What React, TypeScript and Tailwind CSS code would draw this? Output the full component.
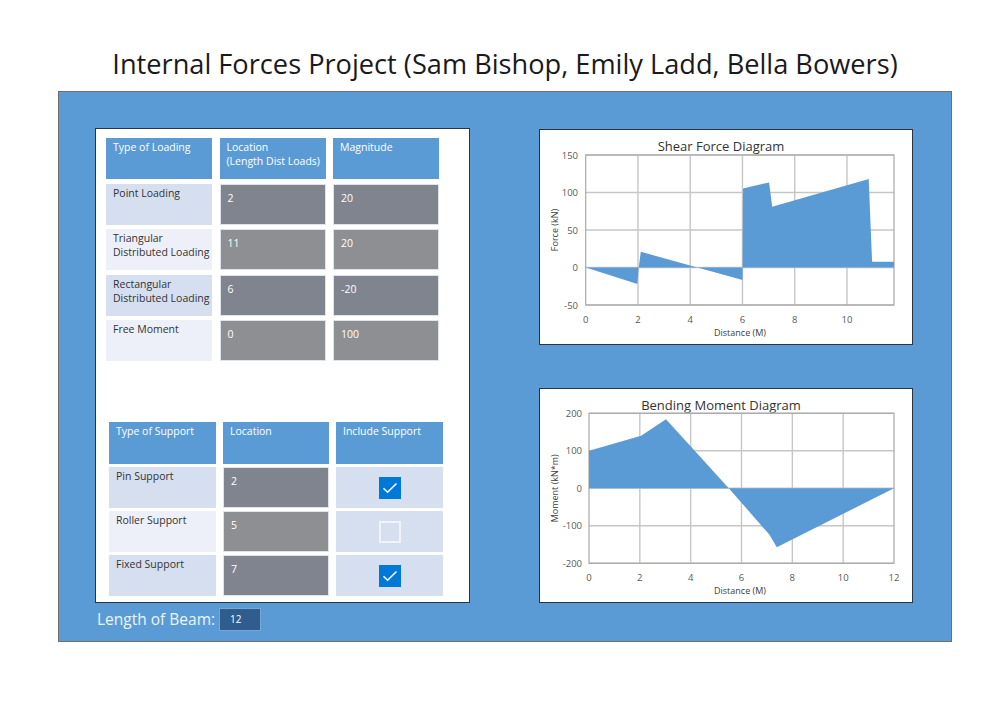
import React from 'react';

const FONT = "font-['Open_Sans','Noto_Sans',sans-serif]";

type Pt = [number, number];

const loadRows = [
  { label: ['Point Loading'], loc: '2', mag: '20', dark: true },
  { label: ['Triangular', 'Distributed Loading'], loc: '11', mag: '20', dark: false },
  { label: ['Rectangular', 'Distributed Loading'], loc: '6', mag: '-20', dark: true },
  { label: ['Free Moment'], loc: '0', mag: '100', dark: false },
];

const supportRows = [
  { label: 'Pin Support', loc: '2', on: true, dark: true },
  { label: 'Roller Support', loc: '5', on: false, dark: false },
  { label: 'Fixed Support', loc: '7', on: true, dark: true },
];

const Header = ({ lines }: { lines: string[] }) => (
  <div className="bg-[#5b9bd5] text-white text-[10.5px] leading-[14px] pl-[7px] pt-[2px] whitespace-nowrap">
    {lines.map((l) => (
      <div key={l}>{l}</div>
    ))}
  </div>
);

const Label = ({ lines, dark }: { lines: string[]; dark: boolean }) => (
  <div
    className={`${dark ? 'bg-[#d6dff0]' : 'bg-[#edf0f9]'} text-[#333] text-[10.5px] leading-[14px] pl-[7px] pt-[2px] whitespace-nowrap`}
  >
    {lines.map((l) => (
      <div key={l}>{l}</div>
    ))}
  </div>
);

const Value = ({ v, dark }: { v: string; dark: boolean }) => (
  <div
    className={`${dark ? 'bg-[#80848f]' : 'bg-[#8e8f93]'} border border-[#dfe3ec] text-white text-[10.5px] leading-[14px] pl-[7px] pt-[6px]`}
  >
    {v}
  </div>
);

const Check = ({ on }: { on: boolean }) => (
  <div className="bg-[#d6dff0] flex items-center justify-center">
    {on ? (
      <div className="w-[22px] h-[22px] bg-[#0078d7] flex items-center justify-center">
        <svg width="16" height="12" viewBox="0 0 16 12">
          <path d="M1.5 6.2 L5.6 10.2 L14.5 1.5" fill="none" stroke="white" strokeWidth="1.6" />
        </svg>
      </div>
    ) : (
      <div className="w-[22px] h-[22px] border-2 border-[#f1f3f9]" />
    )}
  </div>
);

type ChartProps = {
  title: string;
  yLabel: string;
  left: number;
  right: number;
  top: number;
  bottom: number;
  xMax: number;
  xTicks: number[];
  yMin: number;
  yMax: number;
  yTicks: number[];
  data: Pt[];
  yLabelX: number;
  yLabelRight: number;
  height: number;
};

const Chart = (p: ChartProps) => {
  const sx = (u: number) => p.left + ((p.right - p.left) * u) / p.xMax;
  const sy = (v: number) => p.top + ((p.bottom - p.top) * (p.yMax - v)) / (p.yMax - p.yMin);
  const pts = [[0, 0] as Pt, ...p.data, [p.data[p.data.length - 1][0], 0] as Pt]
    .map(([u, v]) => `${sx(u).toFixed(1)},${sy(v).toFixed(1)}`)
    .join(' ');
  const mid = (p.top + p.bottom) / 2;
  return (
    <div className="bg-white border border-[#2b3440] w-[374px]">
      <svg width="372" height={p.height} className="block">
        <text x="181" y="21" textAnchor="middle" fontSize="13" fill="#333" fontFamily="Open Sans">
          {p.title}
        </text>
        {p.xTicks.map((t) => (
          <line key={'v' + t} x1={sx(t)} x2={sx(t)} y1={p.top} y2={p.bottom} stroke="#c6c6c6" strokeWidth="1.4" />
        ))}
        {p.yTicks.map((t) => (
          <line key={'h' + t} x1={p.left} x2={p.right} y1={sy(t)} y2={sy(t)} stroke="#c6c6c6" strokeWidth="1.4" />
        ))}
        <rect x={p.left} y={p.top} width={p.right - p.left} height={p.bottom - p.top} fill="none" stroke="#a9a9a9" strokeWidth="1.2" />
        <polygon points={pts} fill="#5b9bd5" />
        {p.yTicks.map((t) => (
          <text key={'yl' + t} x={p.yLabelRight} y={sy(t) + 3.5} textAnchor="end" fontSize="9.5" fill="#595959" fontFamily="Open Sans">
            {t}
          </text>
        ))}
        {[0, ...p.xTicks, ...(p.xMax === 12 ? [12] : [])].map((t) => (
          <text key={'xl' + t} x={sx(t)} y={p.bottom + 18} textAnchor="middle" fontSize="9.5" fill="#595959" fontFamily="Open Sans">
            {t}
          </text>
        ))}
        <text x="200" y={p.bottom + 31} textAnchor="middle" fontSize="9" fill="#404040" fontFamily="Open Sans">
          Distance (M)
        </text>
        <text
          x={p.yLabelX}
          y={mid}
          textAnchor="middle"
          fontSize="9"
          fill="#404040"
          fontFamily="Open Sans"
          transform={`rotate(-90 ${p.yLabelX} ${mid})`}
          dominantBaseline="middle"
        >
          {p.yLabel}
        </text>
      </svg>
    </div>
  );
};

const shearData: Pt[] = [
  [0, 0],
  [1.98, -22],
  [2.03, 0],
  [2.11, 21],
  [6, -16.5],
  [6.02, 105.5],
  [7.02, 113.5],
  [7.14, 81],
  [10.83, 118],
  [10.96, 7.7],
  [11.8, 7.7],
];

const momentData: Pt[] = [
  [0, 100],
  [2.05, 140],
  [3.03, 184],
  [5.5, 0],
  [7.1, -124],
  [7.39, -157],
  [12, 0],
];

const App: React.FC = () => {
  return (
    <div className={`w-[1000px] h-[707px] bg-white ${FONT}`}>
      <div className="ml-[58px] w-[894px] h-[91px] pt-[44px] text-center text-[27.2px] leading-[40px] text-[#1a1a1a] whitespace-nowrap">
        Internal Forces Project (Sam Bishop, Emily Ladd, Bella Bowers)
      </div>

      <div className="ml-[58px] w-[894px] h-[551px] bg-[#5b9bd5] border border-[#6f6f6f] flex pl-[36px] pt-[36px]">
        {/* left side: input tables */}
        <div className="flex flex-col">
          <div className="w-[375px] h-[475px] bg-white border border-[#2b3440] flex flex-col">
            <div className="ml-[10px] mt-[9px] grid grid-cols-[106px_106px_106px] gap-x-[7.5px] grid-rows-[41px_41px_41px_41px_41px] gap-y-[4.5px]">
              <Header lines={['Type of Loading']} />
              <Header lines={['Location', '(Length Dist Loads)']} />
              <Header lines={['Magnitude']} />
              {loadRows.map((r) => (
                <React.Fragment key={r.label.join()}>
                  <Label lines={r.label} dark={r.dark} />
                  <Value v={r.loc} dark={r.dark} />
                  <Value v={r.mag} dark={r.dark} />
                </React.Fragment>
              ))}
            </div>

            <div className="ml-[13px] mt-[61px] grid grid-cols-[107px_106px_107px] gap-x-[7px] grid-rows-[42px_41px_41px_41px] gap-y-[3px]">
              <Header lines={['Type of Support']} />
              <Header lines={['Location']} />
              <Header lines={['Include Support']} />
              {supportRows.map((r) => (
                <React.Fragment key={r.label}>
                  <Label lines={[r.label]} dark={r.dark} />
                  <Value v={r.loc} dark={r.dark} />
                  <Check on={r.on} />
                </React.Fragment>
              ))}
            </div>
          </div>

          <div className="mt-[5px] flex items-center gap-[4px]">
            <span className="ml-[2px] text-[15.5px] leading-[23px] text-[#eef4fb]">Length of Beam:</span>
            <div className="w-[42px] h-[23px] bg-[#2f5d8e] border border-[#7aa6d6] text-white text-[10px] leading-[21px] pl-[10px]">
              12
            </div>
          </div>
        </div>

        {/* right side: diagrams */}
        <div className="ml-[69px] mt-[1px] flex flex-col gap-[43px]">
          <Chart
            title="Shear Force Diagram"
            yLabel="Force (kN)"
            left={45.7}
            right={354}
            top={25}
            bottom={175}
            xMax={11.8}
            xTicks={[2, 4, 6, 8, 10]}
            yMin={-50}
            yMax={150}
            yTicks={[150, 100, 50, 0, -50]}
            data={shearData}
            yLabelX={16}
            yLabelRight={38}
            height={214}
          />
          <Chart
            title="Bending Moment Diagram"
            yLabel="Moment (kN*m)"
            left={49}
            right={354}
            top={24.3}
            bottom={174.3}
            xMax={12}
            xTicks={[2, 4, 6, 8, 10]}
            yMin={-200}
            yMax={200}
            yTicks={[200, 100, 0, -100, -200]}
            data={momentData}
            yLabelX={16}
            yLabelRight={42}
            height={213}
          />
        </div>
      </div>
    </div>
  );
};

export default App;
